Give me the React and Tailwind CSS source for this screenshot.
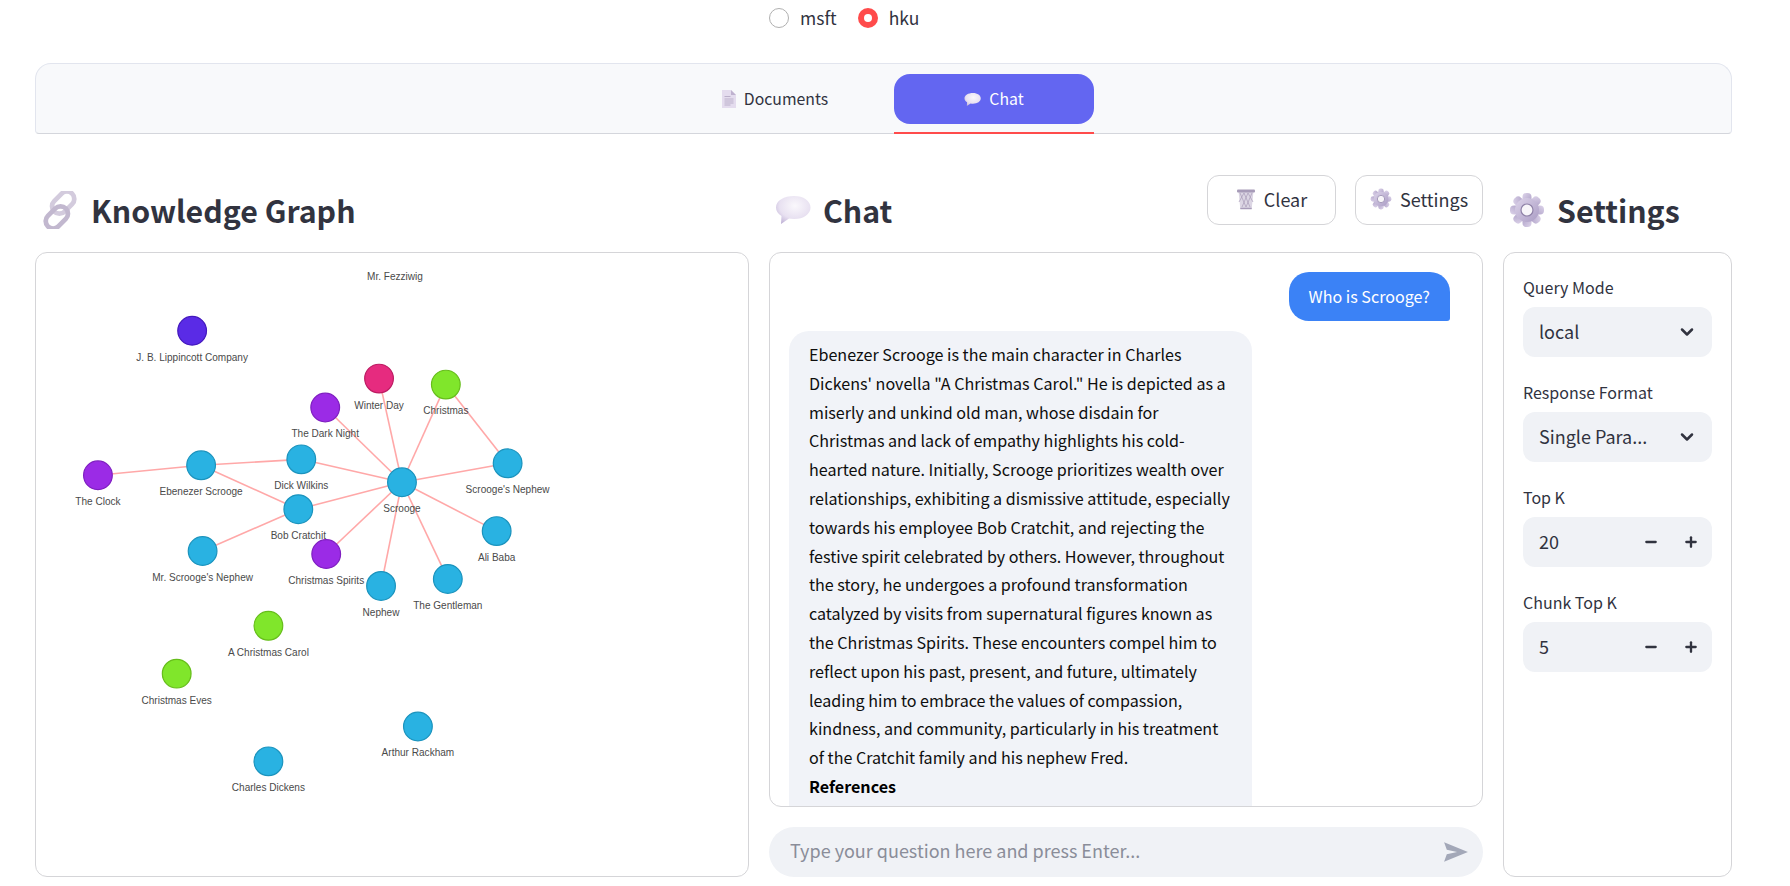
import { ChevronDown, Minus, Plus } from "lucide-react";

const LINES = [
  "Ebenezer Scrooge is the main character in Charles",
  "Dickens' novella \"A Christmas Carol.\" He is depicted as a",
  "miserly and unkind old man, whose disdain for",
  "Christmas and lack of empathy highlights his cold-",
  "hearted nature. Initially, Scrooge prioritizes wealth over",
  "relationships, exhibiting a dismissive attitude, especially",
  "towards his employee Bob Cratchit, and rejecting the",
  "festive spirit celebrated by others. However, throughout",
  "the story, he undergoes a profound transformation",
  "catalyzed by visits from supernatural figures known as",
  "the Christmas Spirits. These encounters compel him to",
  "reflect upon his past, present, and future, ultimately",
  "leading him to embrace the values of compassion,",
  "kindness, and community, particularly in his treatment",
  "of the Cratchit family and his nephew Fred.",
];

const BLUE = ["#29b2e2", "#1b93bd"];
const PURPLE = ["#9b2be6", "#7f1fc0"];
const GREEN = ["#80e62b", "#66bd1b"];

// positions are relative to the graph panel
const NODES = {
  lippincott: { x: 156.5, y: 78, c: ["#5a2be6", "#4419bd"], label: "J. B. Lippincott Company" },
  winter: { x: 344, y: 126, c: ["#e62b7f", "#bd1b62"], label: "Winter Day" },
  christmas: { x: 411, y: 132, c: GREEN, label: "Christmas" },
  dark: { x: 290, y: 155, c: PURPLE, label: "The Dark Night" },
  dick: { x: 266, y: 207, c: BLUE, label: "Dick Wilkins" },
  ebenezer: { x: 165.5, y: 213, c: BLUE, label: "Ebenezer Scrooge" },
  clock: { x: 62, y: 223, c: PURPLE, label: "The Clock" },
  scrooge: { x: 367, y: 230, c: BLUE, label: "Scrooge" },
  scroogeNephew: { x: 473, y: 211, c: BLUE, label: "Scrooge's Nephew" },
  bob: { x: 263, y: 257, c: BLUE, label: "Bob Cratchit" },
  mrNephew: { x: 167, y: 299, c: BLUE, label: "Mr. Scrooge's Nephew" },
  spirits: { x: 291, y: 302, c: PURPLE, label: "Christmas Spirits" },
  ali: { x: 462, y: 279, c: BLUE, label: "Ali Baba" },
  gentleman: { x: 413, y: 327, c: BLUE, label: "The Gentleman" },
  nephew: { x: 346, y: 334, c: BLUE, label: "Nephew" },
  carol: { x: 233, y: 374, c: GREEN, label: "A Christmas Carol" },
  eves: { x: 141, y: 422, c: GREEN, label: "Christmas Eves" },
  rackham: { x: 383, y: 475, c: BLUE, label: "Arthur Rackham" },
  dickens: { x: 233, y: 510, c: BLUE, label: "Charles Dickens" },
};

const EDGES = [
  ["clock", "ebenezer"],
  ["ebenezer", "dick"],
  ["ebenezer", "bob"],
  ["mrNephew", "bob"],
  ["dick", "scrooge"],
  ["bob", "scrooge"],
  ["dark", "scrooge"],
  ["winter", "scrooge"],
  ["christmas", "scrooge"],
  ["christmas", "scroogeNephew"],
  ["scroogeNephew", "scrooge"],
  ["ali", "scrooge"],
  ["gentleman", "scrooge"],
  ["nephew", "scrooge"],
  ["spirits", "scrooge"],
];

const TEETH = [0, 45, 90, 135, 180, 225, 270, 315];

const Defs = () => (
  <svg width="0" height="0" className="absolute">
    <defs>
      <radialGradient id="bubble" cx="0.55" cy="0.35" r="0.75">
        <stop offset="0" stopColor="#faf8fc" />
        <stop offset="0.6" stopColor="#e8e1f1" />
        <stop offset="1" stopColor="#bcaed4" />
      </radialGradient>
      <linearGradient id="lavDark" x1="0" y1="0" x2="1" y2="1">
        <stop offset="0" stopColor="#ddd4ea" />
        <stop offset="1" stopColor="#aa9cc4" />
      </linearGradient>
    </defs>
  </svg>
);

const BubbleIcon = ({ className }) => (
  <svg viewBox="0 0 36 30" className={className}>
    <path
      d="M19 1C9 1 1 5.500 1 12.500c0 3.500 2 6.500 5.500 8.500L6 29l8-5.500c1.500.300 3.300.500 5 .500 9.500 0 16.500-4.800 16.500-11.500S28.500 1 19 1z"
      fill="url(#bubble)"
    />
  </svg>
);

const GearIcon = ({ className }) => (
  <svg viewBox="0 0 36 36" className={className}>
    {TEETH.map((deg) => (
      <rect
        key={deg}
        x="13.500"
        y="1"
        width="9"
        height="12"
        rx="4"
        fill="url(#lavDark)"
        transform={`rotate(${deg} 18 18)`}
      />
    ))}
    <circle cx="18" cy="18" r="12" fill="url(#lavDark)" />
    <circle cx="18" cy="18" r="6" fill="#f7f5f9" stroke="#8f82a8" strokeWidth="1.200" />
  </svg>
);

const LinkIcon = ({ className }) => (
  <svg viewBox="0 0 36 36" className={className} fill="none">
    <rect x="14" y="-1" width="14" height="24" rx="7" transform="rotate(45 21 11)" stroke="#d3cbdd" strokeWidth="4.500" />
    <rect x="8" y="13" width="14" height="24" rx="7" transform="rotate(45 15 25)" stroke="#c2b8cf" strokeWidth="4.500" />
  </svg>
);

const DocIcon = ({ className }) => (
  <svg viewBox="0 0 14 18" className={className}>
    <path d="M0 0h9l5 5v13H0z" fill="#e4dcee" />
    <path d="M9 0l5 5H9z" fill="#bfb2cf" />
    <path d="M2.500 6.500h6M2.500 9h9M2.500 11h9M2.500 13h9M2.500 15h6" stroke="#b0a4c0" strokeWidth=".8" />
  </svg>
);

const TrashIcon = ({ className }) => (
  <svg viewBox="0 0 20 22" className={className} fill="none">
    <path d="M2.500 3h15l-1.800 18H4.300z" fill="#dcd6e4" />
    <path d="M4 5l6 14M8 5l6 14M12 5l5 9M16 5l-6 14M12 5l-6 14M8 5l-5 9" stroke="#a79bb8" strokeWidth=".7" />
    <rect x="1" y="1.500" width="18" height="3" rx="1" fill="#a79bb8" />
    <path d="M4.300 20.500h11.400" stroke="#a79bb8" strokeWidth="1.500" />
  </svg>
);

const Graph = () => (
  <svg viewBox="0 0 714 625" className="block h-full w-full">
    {EDGES.map(([a, b]) => (
      <line
        key={a + b}
        x1={NODES[a].x}
        y1={NODES[a].y}
        x2={NODES[b].x}
        y2={NODES[b].y}
        stroke="#ffa8a8"
        strokeWidth="1.600"
      />
    ))}
    {Object.entries(NODES).map(([id, n]) => (
      <g key={id}>
        <circle cx={n.x} cy={n.y} r="14.400" fill={n.c[0]} stroke={n.c[1]} strokeWidth="1.200" />
        <text
          x={n.x}
          y={n.y + 30}
          textAnchor="middle"
          fontSize="10.100"
          fill="#4a4a4a"
          fontFamily="'Liberation Sans', Arial, sans-serif"
        >
          {n.label}
        </text>
      </g>
    ))}
    <text
      x="360"
      y="27.500"
      textAnchor="middle"
      fontSize="10.100"
      fill="#4a4a4a"
      fontFamily="'Liberation Sans', Arial, sans-serif"
    >
      Mr. Fezziwig
    </text>
  </svg>
);

const Heading = ({ icon, children }) => (
  <h2 className="flex h-[70px] items-center gap-[12px] pl-[6px] text-[30.3px] leading-[40px] font-semibold text-[#31333f]">
    {icon}
    {children}
  </h2>
);

const SelectField = ({ label, value }) => (
  <div className="mb-[17px]">
    <div className="mb-[8px] h-[30px] pt-[6px] text-[16px] leading-[24px]">{label}</div>
    <div className="flex h-[50px] items-center justify-between rounded-xl bg-[#f0f2f6] pr-[15px] pb-[1px] pl-[16px] text-[18px]">
      <span>{value}</span>
      <ChevronDown size={20} strokeWidth={3} />
    </div>
  </div>
);

const NumberField = ({ label, value }) => (
  <div className="mb-[17px]">
    <div className="mb-[8px] h-[30px] pt-[6px] text-[16px] leading-[24px]">{label}</div>
    <div className="flex h-[50px] items-center rounded-xl bg-[#f0f2f6] pr-[13px] pb-[1px] pl-[16px] text-[18px]">
      <span className="flex-1">{value}</span>
      <Minus size={16} strokeWidth={3.5} className="mr-[24px]" />
      <Plus size={16} strokeWidth={3.5} />
    </div>
  </div>
);

const Radio = ({ checked, label }) => (
  <label className="flex items-center gap-[11px] text-[17.5px] leading-[24px]">
    {checked ? (
      <span className="flex h-[20px] w-[20px] items-center justify-center rounded-full bg-[#ff4b4b]">
        <span className="h-[8px] w-[8px] rounded-full bg-white" />
      </span>
    ) : (
      <span className="h-[20px] w-[20px] rounded-full border border-[#b0b0b0]" />
    )}
    {label}
  </label>
);

export default function App() {
  return (
    <div className="ml-[35px] h-[886px] w-[1697px] overflow-hidden bg-white font-['Noto_Sans_CJK_SC','Noto_Sans',sans-serif] text-[#31333f]">
      <Defs />

      {/* dataset radios */}
      <div className="flex h-[63px] items-start gap-[21px] pt-[6px] pl-[734px]">
        <Radio label="msft" />
        <Radio checked label="hku" />
      </div>

      {/* tabs */}
      <div className="flex h-[71px] justify-center gap-[19px] rounded-t-2xl rounded-b-[4px] border border-[#e2e5ee] border-b-[#d4d6dc] bg-[#f8f9fb] pt-[10px] pl-[2px]">
        <div className="flex h-[50px] w-[200px] items-center justify-center gap-[8px] text-[15.8px]">
          <DocIcon className="h-[18px] w-[14px]" />
          Documents
        </div>
        <div className="relative flex h-[50px] w-[200px] items-center justify-center gap-[8px] rounded-2xl bg-[#6366f1] text-[15.8px] text-white">
          <BubbleIcon className="h-[15px] w-[17px]" />
          Chat
          <span className="absolute top-[58px] right-0 left-0 h-[2px] bg-[#ff4b4b]" />
        </div>
      </div>

      {/* columns */}
      <div className="mt-[41px] flex gap-[20px]">
        <section className="flex w-[714px] flex-col">
          <div className="mb-[5px] h-[72px]">
            <Heading icon={<LinkIcon className="h-[38px] w-[38px]" />}>Knowledge Graph</Heading>
          </div>
          <div className="h-[625px] overflow-hidden rounded-xl border border-[#d5d5d8]">
            <Graph />
          </div>
        </section>

        <section className="flex w-[714px] flex-col">
          <div className="mb-[5px] flex h-[72px] justify-between">
            <Heading icon={<BubbleIcon className="h-[30px] w-[36px]" />}>Chat</Heading>
            <div className="flex h-[50px] gap-[19px]">
              <button className="flex w-[129px] items-center justify-center gap-[8px] rounded-xl border border-[#d5d5d8] pb-[2px] text-[18px]">
                <TrashIcon className="h-[22px] w-[20px]" />
                Clear
              </button>
              <button className="flex w-[128px] items-center justify-center gap-[8px] rounded-xl border border-[#d5d5d8] pb-[2px] text-[18px]">
                <GearIcon className="h-[22px] w-[22px]" />
                Settings
              </button>
            </div>
          </div>
          <div className="mb-[20px] h-[555px] overflow-hidden rounded-xl border border-[#d5d5d8] pt-[19px] pr-[32px] pl-[19px]">
            <div className="flex justify-end">
              <div className="flex h-[49px] items-center rounded-[20px] rounded-br-[3px] bg-[#3b82f6] px-[20px] text-[16.1px] text-white">
                Who is Scrooge?
              </div>
            </div>
            <div className="mt-[10px] w-[463px] rounded-t-[20px] bg-[#f1f3f8] px-[20px] pt-[9px] pb-[40px] text-[16.1px] leading-[28.8px] text-[#0e0e0e]">
              {LINES.map((line) => (
                <div key={line} className="whitespace-nowrap">{line}</div>
              ))}
              <div className="font-semibold text-black">References</div>
            </div>
          </div>
          <div className="flex h-[50px] items-center justify-between rounded-[25px] bg-[#f0f2f6] pr-[14px] pb-[3px] pl-[21px] text-[18px] text-[#8a8d99]">
            <span>Type your question here and press Enter...</span>
            <svg viewBox="0 0 24 24" className="mt-[3px] h-[26px] w-[26px]" fill="#a3a8b8">
              <path d="M1 21 23 12 1 3 3.500 10 13 12 3.500 14z" />
            </svg>
          </div>
        </section>

        <section className="flex w-[229px] flex-col">
          <div className="mb-[5px] h-[72px]">
            <Heading icon={<GearIcon className="h-[36px] w-[36px]" />}>Settings</Heading>
          </div>
          <div className="h-[625px] rounded-xl border border-[#d5d5d8] px-[19px] pt-[16px]">
            <SelectField label="Query Mode" value="local" />
            <SelectField label="Response Format" value="Single Para..." />
            <NumberField label="Top K" value="20" />
            <NumberField label="Chunk Top K" value="5" />
          </div>
        </section>
      </div>
    </div>
  );
}
